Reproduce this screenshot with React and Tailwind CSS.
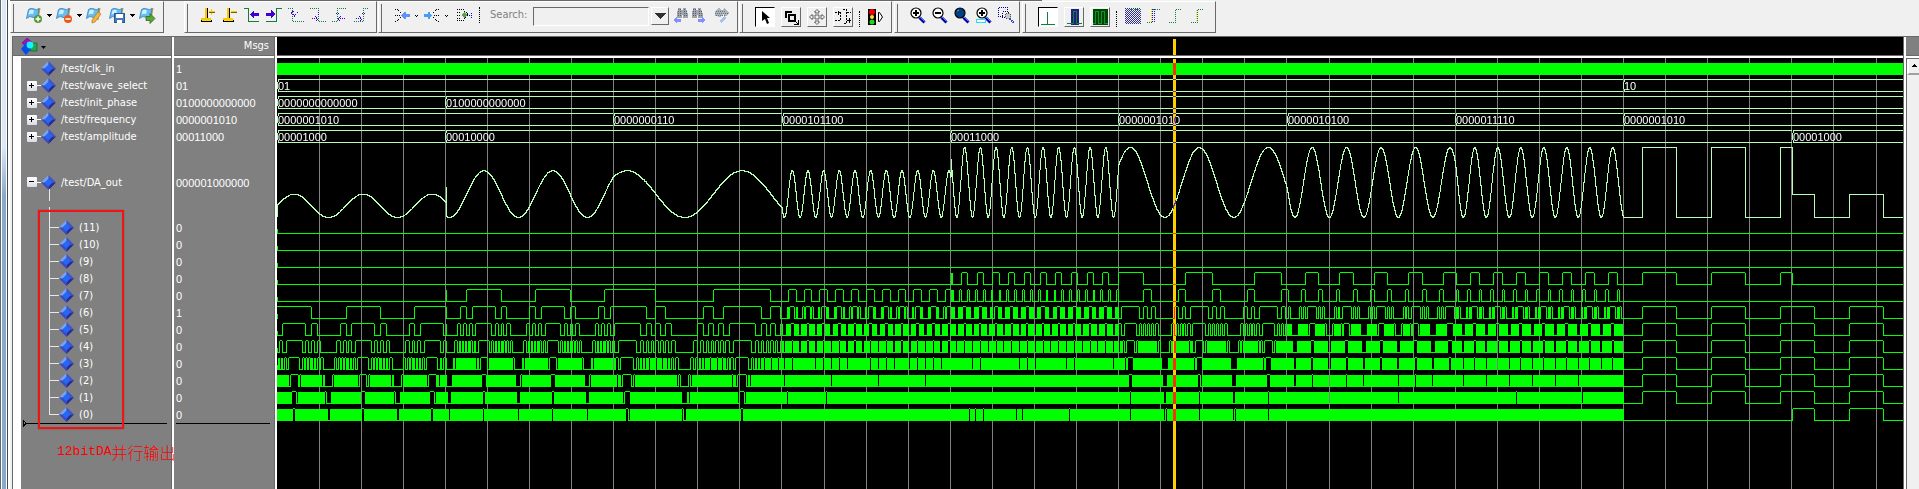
import React from 'react';
import clsx from 'clsx';

const CLOCKS_PER_SEGMENT = 2000;
const CLOCKS_PER_PX = 11.88;
const GRID_STEP = 42.08;
const PLOT_WIDTH = 1700;

// one entry per stimulus step of the test bench
const SEGMENTS = [
  { square: false, offset: 0, freq: 10, amp: 8 },
  { square: false, offset: 2048, freq: 10, amp: 16 },
  { square: false, offset: 2048, freq: 6, amp: 16 },
  { square: false, offset: 2048, freq: 44, amp: 16 },
  { square: false, offset: 2048, freq: 44, amp: 24 },
  { square: false, offset: 2048, freq: 10, amp: 24 },
  { square: false, offset: 2048, freq: 20, amp: 24 },
  { square: false, offset: 2048, freq: 30, amp: 24 },
  { square: true, offset: 2048, freq: 10, amp: 24 },
  { square: true, offset: 2048, freq: 10, amp: 8 },
];

const SEGMENT_PX = CLOCKS_PER_SEGMENT / CLOCKS_PER_PX;

const BUSES = [
  { id: 'wave_select', top: 21, values: [[0, '01'], [8, '10']] },
  { id: 'init_phase', top: 38, values: [[0, '0000000000000'], [1, '0100000000000']] },
  {
    id: 'frequency',
    top: 55,
    values: [
      [0, '0000001010'],
      [2, '0000000110'],
      [3, '0000101100'],
      [5, '0000001010'],
      [6, '0000010100'],
      [7, '0000011110'],
      [8, '0000001010'],
    ],
  },
  { id: 'amplitude', top: 72, values: [[0, '00001000'], [1, '00010000'], [4, '00011000'], [9, '00001000']] },
];

const SIGNALS = [
  { name: '/test/clk_in', value: '1' },
  { name: '/test/wave_select', value: '01', bus: true },
  { name: '/test/init_phase', value: '0100000000000', bus: true },
  { name: '/test/frequency', value: '0000001010', bus: true },
  { name: '/test/amplitude', value: '00011000', bus: true },
];

const BITS = [11, 10, 9, 8, 7, 6, 5, 4, 3, 2, 1, 0];

function segmentAt(clock) {
  const index = Math.floor(Math.max(clock, 0) / CLOCKS_PER_SEGMENT);
  return SEGMENTS[Math.min(index, SEGMENTS.length - 1)];
}

// 13 bit phase accumulator, 8 bit table, amplitude scaled by 1/16
function simulate() {
  const columns = [];
  let acc = 0;
  let clock = 0;
  for (let x = 0; x < PLOT_WIDTH; x++) {
    const samples = [];
    while (clock < (x + 1) * CLOCKS_PER_PX) {
      const step = segmentAt(clock);
      const amp = segmentAt(clock - 8).amp;
      const offset = segmentAt(clock - 16).offset;
      const phase = ((acc + offset) % 8192) / 8192;
      let level = Math.round(127.5 + 127.5 * Math.sin(2 * Math.PI * phase));
      if (step.square) level = phase < 0.5 ? 255 : 0;
      samples.push((amp * level) >> 4);
      acc = (acc + step.freq) % 8192;
      clock++;
    }
    columns.push(samples);
  }
  return columns;
}

function bitPath(columns, bit, low) {
  let d = `M0 ${low - 4}h1v5h-1z`;
  let last = (columns[0][0] >> bit) & 1;
  let runStart = 0;
  const flush = (end) => {
    if (end > runStart) d += `M${runStart} ${last ? low - 12 : low}h${end - runStart}v1H${runStart}z`;
  };
  columns.forEach((samples, x) => {
    let current = last;
    let toggled = false;
    samples.forEach((sample) => {
      const next = (sample >> bit) & 1;
      if (next !== current) toggled = true;
      current = next;
    });
    if (toggled) {
      flush(x);
      d += `M${x} ${low - 11}h1v12h-1z`;
      runStart = x + 1;
      last = current;
    }
  });
  flush(columns.length);
  return d;
}

function analogPath(columns) {
  const toY = (v) => Math.round(159 - (v * 70) / 382);
  let prev = 159;
  let d = '';
  columns.forEach((samples, x) => {
    const ys = samples.map(toY);
    let top = Math.min(...ys);
    let bottom = Math.max(...ys);
    if (prev < top) top = prev;
    if (prev > bottom + 1) bottom = prev - 1;
    d += `M${x} ${top}h1V${bottom + 1}h-1z`;
    prev = ys[ys.length - 1];
  });
  return d;
}

function busPath({ top, values }) {
  let d = '';
  values.forEach(([segment], i) => {
    const start = Math.floor(segment * SEGMENT_PX);
    const end = i + 1 < values.length ? Math.floor(values[i + 1][0] * SEGMENT_PX) : PLOT_WIDTH;
    d += `M${start + 1} ${top}H${end}v1H${start + 1}z`;
    d += `M${start + 1} ${top + 12}H${end}v1H${start + 1}z`;
    d += `M${start + 1} ${top + 1}h1v2h-1zM${start + 1} ${top + 10}h1v2h-1z`;
    d += `M${start} ${top + 3}h1v7h-1z`;
  });
  return d;
}

const COLUMNS = simulate();
const ANALOG = analogPath(COLUMNS);
const BIT_PATHS = BITS.map((bit, i) => bitPath(COLUMNS, bit, 175 + 17 * i));
const GRID_LINES = Array.from({ length: 40 }, (_, i) => Math.floor((i + 1) * GRID_STEP));

function WavePlot() {
  return (
    <svg className="absolute inset-0 h-full w-full" shapeRendering="crispEdges" role="img" aria-label="Waveforms">
      {GRID_LINES.map((x) => (
        <rect key={x} x={x} y="0" width="1" height="100%" fill="#808080" />
      ))}
      <rect x="0" y="5" width="100%" height="12" fill="#00ff00" />
      {BUSES.map((bus) => (
        <g key={bus.id}>
          <path d={busPath(bus)} fill="#b4ffb4" />
          {bus.values.map(([segment, text]) => (
            <text
              key={segment}
              x={Math.floor(segment * SEGMENT_PX) + 1}
              y={bus.top + 11}
              fill="#fff"
              className="font-['Liberation_Sans',sans-serif] text-[11px]"
            >
              {text}
            </text>
          ))}
        </g>
      ))}
      <path d={ANALOG} fill="#b4ffb4" />
      {BIT_PATHS.map((d, i) => (
        <path key={BITS[i]} d={d} fill="#00ff00" />
      ))}
      <rect x="896" y="1" width="3" height="100%" fill="#ffd000" className="mix-blend-difference" />
    </svg>
  );
}

function Diamond() {
  return (
    <svg width="15" height="15" viewBox="0 0 15 15" className="shrink-0">
      <path d="M7.5 0 0 7.5h7.5z" fill="#7aa2f0" />
      <path d="M7.5 0 15 7.5H7.5z" fill="#3d55c8" />
      <path d="M0 7.5 7.5 15V7.5z" fill="#3a4cc0" />
      <path d="M15 7.5 7.5 15V7.5z" fill="#2a2a96" />
      <path d="M7.5 3.5 11.5 7.5 7.5 11.5 3.5 7.5z" fill="#2468f8" />
    </svg>
  );
}

function Expander({ open }) {
  return (
    <button
      type="button"
      aria-label={open ? 'Collapse' : 'Expand'}
      className="flex h-2.5 w-2.5 shrink-0 items-center justify-center rounded-[1px] bg-gradient-to-b from-white to-[#d8dce4]"
    >
      <svg width="6" height="6" viewBox="0 0 6 6" shapeRendering="crispEdges" className="block">
        <path d={open ? 'M0 2h5v1H0z' : 'M0 2h2V0h1v2h2v1H3v2H2V3H0z'} fill="#000" />
      </svg>
    </button>
  );
}

function NamePane() {
  return (
    <section className="flex w-[158px] shrink-0 flex-col">
      <header className="flex h-[18px] items-center bg-[#808080] pl-2">
        <button type="button" aria-label="Object filter" className="flex items-center">
          <svg width="26" height="17" viewBox="0 0 26 17">
            <path d="M1 5 6 0l5 4-5 5z" fill="#a010c0" stroke="#500060" strokeWidth=".5" />
            <path d="M9 5h7v8H9z" fill="#20a848" stroke="#0a5020" strokeWidth=".6" />
            <path d="M0 11 5 5l5 6-5 6z" fill="#0050e8" />
            <circle cx="9" cy="7" r="3.4" fill="#18f0ff" />
            <path d="M20 8h5l-2.500 3z" fill="#000" />
          </svg>
        </button>
      </header>
      <div className="h-[3px] border-t border-[#696969] bg-white" />
      <div className="flex-1 border-l-8 border-white bg-[#808080] pt-0.5">
        <ul>
          {SIGNALS.map((signal) => (
            <li key={signal.name} className="flex h-[17px] items-center pl-1.5">
              {signal.bus ? (
                <>
                  <Expander />
                  <span className="h-px w-1 bg-white" />
                </>
              ) : (
                <span className="w-3.5" />
              )}
              <Diamond />
              <span className="pt-0.5 pl-[5px]">{signal.name}</span>
            </li>
          ))}
          <li>
            <div className="flex h-[74px] items-center pl-1.5">
              <Expander open />
              <span className="h-px w-1 bg-white" />
              <Diamond />
              <span className="pt-0.5 pl-[5px]">/test/DA_out</span>
            </div>
            <ul className="relative pl-7">
              <li aria-hidden="true" className="absolute -top-3 left-7 h-[208px] w-px bg-[#e8e8e8]" />
              <li aria-hidden="true" className="absolute -top-[30px] left-7 h-3 w-px bg-[#e8e8e8]" />
              {BITS.map((bit) => (
                <li key={bit} className="flex h-[17px] items-center">
                  <span className="h-px w-2.5 bg-[#e8e8e8]" />
                  <Diamond />
                  <span className="pt-0.5 pl-[5px]">({bit})</span>
                </li>
              ))}
            </ul>
          </li>
        </ul>
        <svg className="-mt-1 block h-2 w-full" shapeRendering="crispEdges">
          <path d="M2 1v7M3 2l2 2-2 3" fill="none" stroke="#000" />
          <rect x="4" y="4" width="142" height="1" fill="#000" />
        </svg>
      </div>
    </section>
  );
}

function ValuePane() {
  return (
    <section className="flex w-[100px] shrink-0 flex-col">
      <header className="flex h-[18px] items-center justify-end bg-[#808080] pr-[5px]">Msgs</header>
      <div className="h-[3px] border-t border-[#696969] bg-white" />
      <div className="flex-1 bg-[#808080] pt-0.5 font-['Liberation_Sans',sans-serif]">
        <ul className="-mb-px pt-px pl-0.5">
          {SIGNALS.map((signal) => (
            <li key={signal.name} className="h-[17px] leading-[17px]">{signal.value}</li>
          ))}
          <li className="h-[74px] leading-[74px]">000001000000</li>
          {BITS.map((bit) => (
            <li key={bit} className="h-[17px] leading-[17px]">{bit === 6 ? '1' : '0'}</li>
          ))}
        </ul>
        <div className="mr-1 ml-0.5 h-px bg-black" />
      </div>
    </section>
  );
}

function Divider() {
  return <div className="w-[3px] shrink-0 border-l border-[#696969] bg-white" />;
}

function ToolGroup({ label, children, spaced, className }) {
  return (
    <div
      role="group"
      aria-label={label}
      className={clsx(
        'flex h-8 shrink-0 items-start border-t border-r border-b border-l border-t-white border-r-[#696969] border-b-[#696969] border-l-white pt-[5px] pl-0.5',
        spaced && 'gap-1.5',
        className
      )}
    >
      <span className={clsx('-mt-[3px] h-7 w-px shrink-0 border-r border-[#696969]', spaced ? 'mr-1.5' : 'mr-3')} />
      {children}
    </div>
  );
}

function Tool({ label, children, w = 16, className }) {
  return (
    <button type="button" aria-label={label} className={clsx('shrink-0', className)}>
      <svg width={w} height="17" viewBox={`0 0 ${w} 17`} className="block" shapeRendering="crispEdges">
        {children}
      </svg>
    </button>
  );
}

function ModeButton({ label, pressed, children }) {
  return (
    <button
      type="button"
      aria-label={label}
      aria-pressed={pressed}
      className={clsx(
        'mr-1.5 h-5 w-5 shrink-0 border',
        pressed
          ? 'border-t-black border-r-white border-b-white border-l-black bg-white'
          : 'border-t-white border-r-[#696969] border-b-[#696969] border-l-white'
      )}
    >
      <svg width="18" height="18" viewBox="0 0 18 18" className="block" shapeRendering="crispEdges">
        {children}
      </svg>
    </button>
  );
}

function Separator({ className }) {
  return <span className={clsx('h-4 w-px shrink-0 border-l border-dotted border-black', className)} />;
}

function Caret({ small, className }) {
  return (
    <svg width="5" height="17" viewBox="0 0 5 17" className={clsx('shrink-0', className)} shapeRendering="crispEdges">
      <path d={small ? 'M0 8h1v1H0zM2 8h1v1H2zM1 9h1v1H1z' : 'M0 7h5v1H4v1H3v1H2V9H1V8H0z'} fill="#000" />
    </svg>
  );
}

function Flag() {
  return (
    <g shapeRendering="auto">
      <path d="M13.500 1 11.500 13" stroke="#c89850" strokeWidth="2" fill="none" />
      <path d="M2.500 2.500Q5 .5 8 2t5-.5L11.500 10Q8 11.500 6 10T.5 11.500z" fill="#68bcf0" stroke="#3080b8" strokeWidth=".8" />
      <path d="M3.500 3.500Q5.500 2 8 3.500L7 7Q4.500 6.500 2.500 7.500z" fill="#d0f0ff" />
    </g>
  );
}

function Lens({ fill = '#fff', children }) {
  return (
    <g shapeRendering="auto">
      <path d="m9.500 10.500 5 5" stroke="#0000a8" strokeWidth="3" />
      <path d="m10 10 4.500 4.500" stroke="#5080ff" strokeWidth="1" />
      <circle cx="6" cy="6" r="5" fill={fill} stroke="#000" strokeWidth="1.200" />
      {children}
    </g>
  );
}

function Toolbar() {
  const dotted = { fill: 'none', strokeWidth: 1, strokeDasharray: '1 1' };
  return (
    <div role="toolbar" aria-label="Wave tools" className="flex h-9 items-start pt-px">
      <ToolGroup label="Bookmarks" className="w-[154px]">
        <Tool label="Add bookmark" w={17}>
          <Flag />
          <g shapeRendering="auto">
            <circle cx="12" cy="12" r="4" fill="#509838" />
            <path d="M12 9.500v5M9.500 12h5" stroke="#fff" strokeWidth="1.500" />
          </g>
        </Tool>
        <Caret className="mr-1 ml-1" />
        <Tool label="Delete bookmark" w={17}>
          <Flag />
          <g shapeRendering="auto">
            <circle cx="12" cy="12" r="4" fill="#e85818" />
            <path d="M9.500 12h5" stroke="#fff" strokeWidth="1.500" />
          </g>
        </Tool>
        <Caret className="mr-1 ml-1" />
        <Tool label="Edit bookmarks" w={17} className="mr-1.5">
          <Flag />
          <path d="m6 13 6-8 3 2-6 8-3 1z" fill="#f0b840" stroke="#b07820" strokeWidth=".7" shapeRendering="auto" />
        </Tool>
        <Tool label="Save bookmarks" w={17}>
          <Flag />
          <path d="M5.500 6.500h10v9h-10z" fill="#4878b8" stroke="#285898" />
          <path d="M7 7h7v4H7zM8 13h5v3H8z" fill="#fff" />
        </Tool>
        <Caret className="mr-1 ml-1" />
        <Tool label="Go to bookmark" w={17}>
          <Flag />
          <path d="M7 9.500h4V6.500l5 5-5 5v-3H7z" fill="#58a838" stroke="#306818" strokeWidth=".8" shapeRendering="auto" />
        </Tool>
      </ToolGroup>

      <ToolGroup label="Cursors" spaced className="ml-5 w-[193px]">
        <Tool label="Insert cursor">
          <path d="M5 1h2v10h4v2H1v-2h4zM9 4h6v1H9zM11 2h1v6h-1z" fill="#f8c800" />
          <path d="M1 13h11v2H1zM7 1h1v10H7z" fill="#000" />
          <path d="M2 13h9v1H2z" fill="#f8e000" />
          <path d="M9 5h6v1H9z" fill="#806000" />
        </Tool>
        <Tool label="Delete cursor">
          <path d="M5 1h2v10h4v2H1v-2h4zM9 4h6v1H9z" fill="#f8c800" />
          <path d="M1 13h11v2H1zM7 1h1v10H7z" fill="#000" />
          <path d="M2 13h9v1H2z" fill="#f8e000" />
          <path d="M9 5h6v1H9z" fill="#806000" />
        </Tool>
        <Tool label="Previous transition">
          <path d="M0 1.500h4.500v13H15" fill="none" stroke="#108038" />
          <path d="m6 7 4-4v3h5v3h-5v3z" fill="#4000d0" />
        </Tool>
        <Tool label="Next transition">
          <path d="M0 14.500h10.500v-13H16" fill="none" stroke="#108038" />
          <path d="M9 7 5 3v3H0v3h5v3z" fill="#4000d0" />
        </Tool>
        <Tool label="Previous falling edge">
          <path d="M0 1.500h4.500v13H16" {...dotted} stroke="#108038" />
          <path d="m3 6 3-2M3 6l6 5M6 9l4-4" {...dotted} stroke="#4000d0" />
        </Tool>
        <Tool label="Next falling edge">
          <path d="M0 1.500h8.500v13H16" {...dotted} stroke="#108038" />
          <path d="M2 11.500h6M5 9l3 3-3 3M8 5v4" {...dotted} stroke="#4000d0" />
        </Tool>
        <Tool label="Previous rising edge">
          <path d="M0 14.500h5.500v-13H15" {...dotted} stroke="#108038" />
          <path d="M6 11.500h7M9 9l-3 3 3 3M4 6h4" {...dotted} stroke="#4000d0" />
        </Tool>
        <Tool label="Next rising edge">
          <path d="M0 14.500h9.500v-13H15" {...dotted} stroke="#108038" />
          <path d="M2 11.500h6M5 9l3 3-3 3M8 6h4" {...dotted} stroke="#4000d0" />
        </Tool>
      </ToolGroup>

      <ToolGroup label="Search" className="ml-px w-[360px]">
        <Tool label="Collapse time" w={17}>
          <path d="M1 2h2l4 4M1 14h2l4-4M1 8h5" {...dotted} stroke="#000" />
          <path d="M7 8h1V7h1V6h1V5h2v2h4v3h-4v2h-2v-1H9v-1H8V9H7z" fill="#6090ff" />
        </Tool>
        <Caret small className="mr-1 ml-1" />
        <Tool label="Expand time" w={17}>
          <path d="M15 2h-2L9 6M15 14h-2l-4-4M15 8h-5" {...dotted} stroke="#000" />
          <path d="M8 8H7V7H6V5H4v2H0v3h4v2h2v-2h1V9h1z" fill="#40a0f8" />
        </Tool>
        <Caret small className="mr-1.5 ml-1" />
        <Tool label="Expand time at cursor" w={17}>
          <path d="M1 2.500h6l5 5-5 6H1M1 5.500h4M1 8.500h4M1 11.500h4" {...dotted} stroke="#000" />
          <path d="M5 8 8 5l3 3-3 3z" fill="#50a850" />
          <path d="M13 8h4M15 6v5" {...dotted} stroke="#0000ff" />
        </Tool>
        <Separator className="mr-2.5 ml-1.5" />
        <label htmlFor="search" className="mr-1.5 text-[11px] leading-4 text-[#808080]">Search:</label>
        <input
          id="search"
          type="text"
          className="mr-0.5 h-[19px] w-[116px] min-w-0 shrink-0 border border-t-[#696969] border-r-white border-b-white border-l-[#696969] bg-transparent px-1 text-black outline-none"
        />
        <button
          type="button"
          aria-label="Search history"
          className="mr-1 flex h-[18px] w-[18px] shrink-0 items-center justify-center border border-t-white border-r-[#696969] border-b-[#696969] border-l-white"
        >
          <svg width="11" height="6" viewBox="0 0 11 6" shapeRendering="crispEdges">
            <path d="M0 0h11L5.500 6z" fill="#303030" />
          </svg>
        </button>
        <Tool label="Find previous" w={17}>
          <path d="M5 1h3v2h2V1h3l2 6v4h-5V8H9v3H4V7z" fill="#a0a4ac" />
          <path d="M5 2v8M7 2v8M11 2v8M13 4v6" {...dotted} stroke="#586068" />
          <path d="m0 13 4-3v2h4v3H4v1z" fill="#8090ff" />
        </Tool>
        <Tool label="Find next" w={17} className="mr-1.5">
          <path d="M3 1h3v2h2V1h3l2 6v4H8V8H7v3H2V7z" fill="#a0a4ac" />
          <path d="M3 2v8M5 2v8M9 2v8M11 4v6" {...dotted} stroke="#586068" />
          <path d="m16 13-4-3v2H8v3h4v1z" fill="#8090ff" />
        </Tool>
        <Tool label="Search options" w={17}>
          <path d="M2 4 6 1l3 2 2-2 5 5-3 3-3-2-3 3-5-1z" fill="#b0b4bc" />
          <path d="M3 4h10M2 6h13M3 8h10" {...dotted} stroke="#687078" />
          <path d="m6 14 5-5 2 2-5 5z" fill="#a8c0f0" />
        </Tool>
      </ToolGroup>

      <ToolGroup label="Mouse modes" className="ml-px w-[153px]">
        <ModeButton label="Select mode" pressed>
          <path d="M6 3v10l3-2 2 5 2-1-2-5h3z" fill="#000" shapeRendering="auto" />
        </ModeButton>
        <ModeButton label="Zoom mode">
          <path d="M4 10V4h6" fill="none" stroke="#000" strokeWidth="2" />
          <path d="M7 7h6v6H7z" fill="none" stroke="#000" strokeWidth="2" />
          <path d="m12 12 4 4M16.500 12v4.500H12" fill="none" stroke="#000" />
        </ModeButton>
        <ModeButton label="Pan mode">
          <path
            d="M9 1.500 6.500 4H8v4H4V6.500L1.500 9 4 11.500V10h4v4H6.500L9 16.500l2.500-2.500H10v-4h4v1.500L16.500 9 14 6.500V8h-4V4h1.500z"
            fill="none"
            stroke="#404040"
            strokeWidth=".8"
            shapeRendering="auto"
          />
        </ModeButton>
        <ModeButton label="Edit mode">
          <path d="M1 4.500h5M6.500 4v9M1 12.500h5M9 1.500h3.500v14H9M13 4.500h4M13 12.500h4" fill="none" stroke="#000" strokeDasharray="2 1" />
          <path d="M4.500 3v4M15.500 10v5" stroke="#000" />
        </ModeButton>
        <Separator className="mt-1 mr-2" />
        <Tool label="Stop drawing" className="mt-px">
          <path d="M0 1h8v16H0z" fill="#000" />
          <g shapeRendering="auto">
            <circle cx="4" cy="4" r="3" fill="#f00000" />
            <circle cx="4" cy="9" r="2" fill="#f8e040" />
            <circle cx="4" cy="14" r="2.500" fill="#20d820" />
            <path d="M10.500 4.500v9h1l3-4.500-3-4.500z" fill="#fff" stroke="#000" />
          </g>
        </Tool>
      </ToolGroup>

      <ToolGroup label="Zoom" spaced className="ml-0.5 w-[126px]">
        <Tool label="Zoom in">
          <Lens><path d="M6 3v6M3 6h6" stroke="#000" strokeWidth="2" /></Lens>
        </Tool>
        <Tool label="Zoom out">
          <Lens><path d="M3 6h6" stroke="#000" strokeWidth="2" /></Lens>
        </Tool>
        <Tool label="Zoom full">
          <Lens fill="#004080"><path d="M3 4 5 3" stroke="#60a0d0" /></Lens>
        </Tool>
        <Tool label="Zoom in on active cursor">
          <Lens><path d="M6 3v6M3 6h6" stroke="#000" strokeWidth="2" /></Lens>
          <path d="M.5 12.500h9v3h-9z" fill="#fff" stroke="#20e0f8" />
        </Tool>
        <Tool label="Zoom range">
          <path d="M.5.5h9v4M.5.5v9h4M4.500 4.500h6v6h-6z" {...dotted} stroke="#000080" />
          <circle cx="10" cy="9" r="3" fill="#c8c8c8" stroke="#505050" strokeDasharray="1 1" />
          <path d="m12 12 4 4" stroke="#3050d0" strokeWidth="2" strokeDasharray="1 1" />
        </Tool>
      </ToolGroup>

      <ToolGroup label="Compare" className="ml-0.5 w-[194px]">
        <ModeButton label="Low detail" pressed>
          <path d="M8 4h1v12H8zM2 16h14v1H2z" fill="#108038" />
        </ModeButton>
        <ModeButton label="Medium detail">
          <path d="M6 1h8v16H6z" fill="#202080" />
          <path d="M2 15.500h6.500v-12h3v12H17" fill="none" stroke="#108038" />
        </ModeButton>
        <ModeButton label="High detail">
          <path d="M2 1h15v16H2z" fill="#004800" />
          <path d="M2 15.500h2.500v-12h3v12h3v-12h3v12H17" fill="none" stroke="#109038" />
        </ModeButton>
        <Separator className="mt-1 mr-2" />
        <Tool label="Delta count" className="mr-1.5">
          {Array.from({ length: 8 }, (_, i) => (
            <path key={i} d={`M0 ${i * 2 + 1.5}h16M1 ${i * 2 + 2.5}h15`} stroke="#303090" strokeDasharray="1 1" />
          ))}
          <path d="M6 2.500h10" stroke="#109038" strokeDasharray="2 1" />
        </Tool>
        <Tool label="Delta edge" className="mr-1.5">
          <path d="M5.500 2v14M7.500 2v14" {...dotted} stroke="#202090" />
          <path d="M4.500 2v14" {...dotted} stroke="#f0d000" />
          <path d="M0 15.500h5M6 2.500h7" {...dotted} stroke="#108038" />
        </Tool>
        <Tool label="Event edge" className="mr-1.5">
          <path d="M0 15.500h6.500v-13H13" {...dotted} stroke="#108038" />
        </Tool>
        <Tool label="Expanded edge">
          <path d="M0 15.500h6.500v-13H13" {...dotted} stroke="#108038" />
          <path d="M5.500 3v12" {...dotted} stroke="#f0e000" />
        </Tool>
      </ToolGroup>
    </div>
  );
}

function ScrollColumn() {
  return (
    <div className="flex w-[13px] shrink-0 flex-col">
      <div className="h-[18px] bg-[#808080]" />
      <div className="h-[3px] border-t border-[#696969] bg-white" />
      <div className="flex-1 border-t border-l border-[#696969] bg-[#f0f0f0]">
        <button
          type="button"
          aria-label="Scroll up"
          className="flex h-4 w-3 items-center justify-center border-b-2 border-l-2 border-b-[#a0a0a0] border-l-white"
        >
          <svg width="7" height="4" viewBox="0 0 7 4" shapeRendering="crispEdges">
            <path d="M3 0h1v1h1v1h1v1H1V2h1V1h1z" fill="#000" />
          </svg>
        </button>
      </div>
    </div>
  );
}

export default function App() {
  return (
    <div className="flex min-h-screen bg-[#f0f0f0] font-['DejaVu_Sans_Condensed','Noto_Sans_CJK_SC',sans-serif] text-[11px] text-white">
      <div className="flex shrink-0">
        <span className="w-px bg-[#5a6878]" />
        <span className="w-px bg-white" />
        <span className="w-1 bg-gradient-to-b from-[#dce8f4] from-30% to-[#8ca8c8] to-40%" />
        <span className="w-px bg-white" />
        <span className="w-px bg-[#404850]" />
        <span className="w-0.5 bg-white" />
      </div>
      <div className="relative flex min-w-0 flex-1 flex-col">
        <div className="absolute top-0 left-0 h-px w-[1032px] bg-[#696969]" />
        <Toolbar />
        <div className="ml-0.5 flex flex-1 border-t border-l border-[#696969]">
          <div className="relative flex">
            <NamePane />
            <Divider />
            <ValuePane />
            <Divider />
            {/* review markup drawn over the panes */}
            <div className="absolute top-[173px] left-[25px] h-[219px] w-[86px] border-2 border-[#f01414] shadow-[0_0_1px_#a02020]" />
            <p className="absolute top-[403px] left-11 flex items-center text-[16px] leading-6 whitespace-nowrap text-[#ff0000]">
              <span className="font-['Liberation_Mono',monospace] text-[13px]">12bitDA</span>
              <span className="font-['Noto_Sans_CJK_SC',sans-serif] font-light">并行输出</span>
            </p>
          </div>
          <section className="flex min-w-0 flex-1 flex-col bg-black">
            <div className="relative h-[18px]">
              <span className="absolute top-0.5 bottom-0 left-[896px] w-[3px] bg-[#ffd000]" />
            </div>
            <div className="h-[3px] border-t border-[#696969] bg-white" />
            <div className="relative isolate flex-1 overflow-hidden bg-black">
              <WavePlot />
            </div>
          </section>
          <Divider />
          <ScrollColumn />
        </div>
      </div>
    </div>
  );
}
